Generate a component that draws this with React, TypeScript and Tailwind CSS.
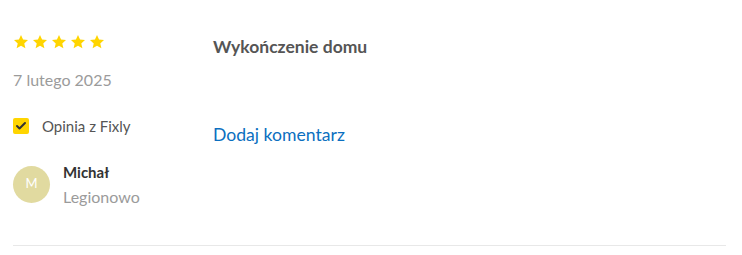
import { Check } from "lucide-react";

function Star() {
  return (
    <svg viewBox="0 0 24 24" className="h-[16px] w-[16px]" fill="#ffd500">
      <path d="M12 1.5l3.1 6.9 7.4.7-5.6 5 1.7 7.4L12 17.6l-6.6 3.9 1.7-7.4-5.6-5 7.4-.7z" />
    </svg>
  );
}

export default function App() {
  return (
    <div className="bg-white pl-[13px] pr-[16px] font-['Lato',sans-serif]">
      <div className="flex pt-[34px] pb-[38px]">
        <div className="w-[200px] shrink-0">
          <div className="flex gap-[3px]">
            {[1, 2, 3, 4, 5].map((i) => (
              <Star key={i} />
            ))}
          </div>
          <p className="mt-[20px] text-[16px] leading-[20px] text-[#9b9b9b]">
            7 lutego 2025
          </p>
          <div className="mt-[25px] flex items-center gap-[13px]">
            <div className="flex h-[16px] w-[16px] items-center justify-center rounded-[2px] bg-[#ffd500]">
              <Check className="h-[12px] w-[12px] text-[#333]" strokeWidth={4} />
            </div>
            <span className="text-[15px] text-[#555]">Opinia z Fixly</span>
          </div>
          <div className="mt-[25px] flex gap-[13px]">
            <div className="mt-[3px] flex h-[37px] w-[37px] items-center justify-center rounded-full bg-[#e1daa0] text-[13px] text-white">
              M
            </div>
            <div>
              <p className="text-[15px] font-bold leading-[18px] text-[#333]">
                Michał
              </p>
              <p className="mt-[6px] text-[16px] leading-[20px] text-[#9b9b9b]">
                Legionowo
              </p>
            </div>
          </div>
        </div>
        <div className="flex flex-col">
          <h3 className="mt-[2px] text-[17.5px] font-bold leading-[22px] text-[#555]">
            Wykończenie domu
          </h3>
          <a className="mt-[66px] text-[17.6px] leading-[22px] text-[#0b6fc0]">
            Dodaj komentarz
          </a>
        </div>
      </div>
      <div className="border-t border-[#e8e8e8]" />
    </div>
  );
}
